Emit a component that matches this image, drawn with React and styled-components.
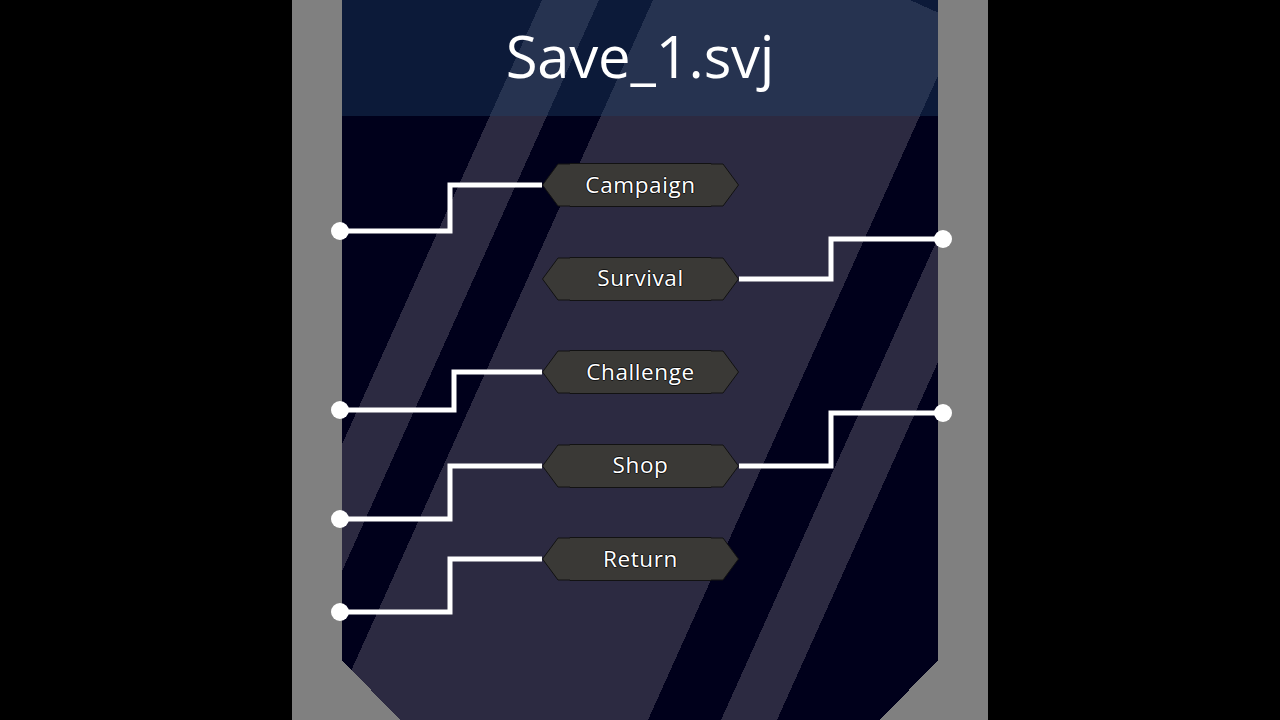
import React from 'react'
import styled, { createGlobalStyle } from 'styled-components'

const GlobalStyle = createGlobalStyle`
  html, body {
    margin: 0;
    padding: 0;
    background: #000;
  }
`

const Stage = styled.div`
  width: 1280px;
  height: 720px;
  display: flex;
  justify-content: center;
  background: #000;
  overflow: hidden;
`

const Frame = styled.div`
  width: 696px;
  height: 720px;
  box-sizing: border-box;
  padding: 0 50px;
  background: #808080;
`

// stripes run at x + 0.45y = const, corners cut at the bottom
const Panel = styled.div`
  height: 720px;
  display: flex;
  flex-direction: column;
  background:
    linear-gradient(to top right, #808080 50%, transparent 50%) left bottom / 58px 60px no-repeat,
    linear-gradient(to top left, #808080 50%, transparent 50%) right bottom / 58px 60px no-repeat,
    linear-gradient(204.23deg, #00001b 11.5px, transparent 11.5px),
    linear-gradient(
      114.23deg,
      #00001b 182.4px,
      #2c2a41 182.4px, #2c2a41 234.4px,
      #00001b 234.4px, #00001b 283.6px,
      #2c2a41 283.6px, #2c2a41 574.5px,
      #00001b 574.5px, #00001b 641.1px,
      #2c2a41 641.1px, #2c2a41 692.1px,
      #00001b 692.1px
    );
`

const Header = styled.header`
  height: 116px;
  flex: none;
  display: flex;
  align-items: center;
  justify-content: center;
  background: rgba(30, 65, 103, 0.4);
`

const Title = styled.h1`
  margin: 0;
  padding-bottom: 6px;
  font-family: 'Open Sans', 'Noto Sans', sans-serif;
  font-weight: 400;
  font-size: 58px;
  letter-spacing: -0.2px;
  color: #fff;
`

const Menu = styled.nav`
  display: flex;
  flex-direction: column;
  gap: 49.5px;
  padding-top: 47px;
`

const Row = styled.div`
  display: grid;
  grid-template-columns: 200px 197px 199px;
  height: 44px;
`

const Wire = styled.svg`
  display: block;
  overflow: visible;
  width: ${p => p.$w}px;
  height: 44px;
`

const Button = styled.button`
  position: relative;
  width: 197px;
  height: 44px;
  padding: 0;
  border: 0;
  background: none;
  cursor: pointer;
  display: flex;
  align-items: center;
  justify-content: center;
`

const Shape = styled.svg`
  position: absolute;
  inset: 0;
  width: 197px;
  height: 44px;
`

const Label = styled.span`
  position: relative;
  font-family: 'Open Sans', 'Noto Sans', sans-serif;
  font-size: 22.5px;
  letter-spacing: 0.6px;
  color: #fff;
  text-shadow: -1px 0 #141414, 1px 0 #141414, 0 -1px #141414, 0 1px #141414;
  padding-bottom: 2px;
`

const HEX =
  '0.5,22 16,1 28,1 28,0.5 169,0.5 169,1 181,1 196.5,22 181,43 169,43 169,43.5 28,43.5 28,43 16,43'

const LeftWire = ({ elbow, drop }) =>
  <Wire $w={200}>
    <path
      d={`M -2 ${22 + drop} H ${elbow} V 22 H 200`}
      fill='none'
      stroke='#fff'
      strokeWidth='5'
    />
    <circle cx='-2' cy={22 + drop} r='9' fill='#fff' />
  </Wire>

const RightWire = ({ elbow, rise }) =>
  <Wire $w={199}>
    <path
      d={`M 0 22 H ${elbow} V ${22 - rise} H 204`}
      fill='none'
      stroke='#fff'
      strokeWidth='5'
    />
    <circle cx='204' cy={22 - rise} r='9' fill='#fff' />
  </Wire>

const items = [
  { label: 'Campaign', left: { elbow: 108, drop: 46 } },
  { label: 'Survival', right: { elbow: 92, rise: 40 } },
  { label: 'Challenge', left: { elbow: 112, drop: 38 } },
  { label: 'Shop', left: { elbow: 108, drop: 53 }, right: { elbow: 92, rise: 53 } },
  { label: 'Return', left: { elbow: 108, drop: 53 } }
]

const App = () =>
  <Stage>
    <GlobalStyle />
    <Frame>
      <Panel>
        <Header>
          <Title>Save_1.svj</Title>
        </Header>
        <Menu>
          {items.map(item =>
            <Row key={item.label}>
              {item.left ? <LeftWire {...item.left} /> : <span />}
              <Button>
                <Shape viewBox='0 0 197 44'>
                  <polygon points={HEX} fill='#3a3936' stroke='#121212' strokeWidth='1' />
                </Shape>
                <Label>{item.label}</Label>
              </Button>
              {item.right ? <RightWire {...item.right} /> : <span />}
            </Row>
          )}
        </Menu>
      </Panel>
    </Frame>
  </Stage>

export default App
